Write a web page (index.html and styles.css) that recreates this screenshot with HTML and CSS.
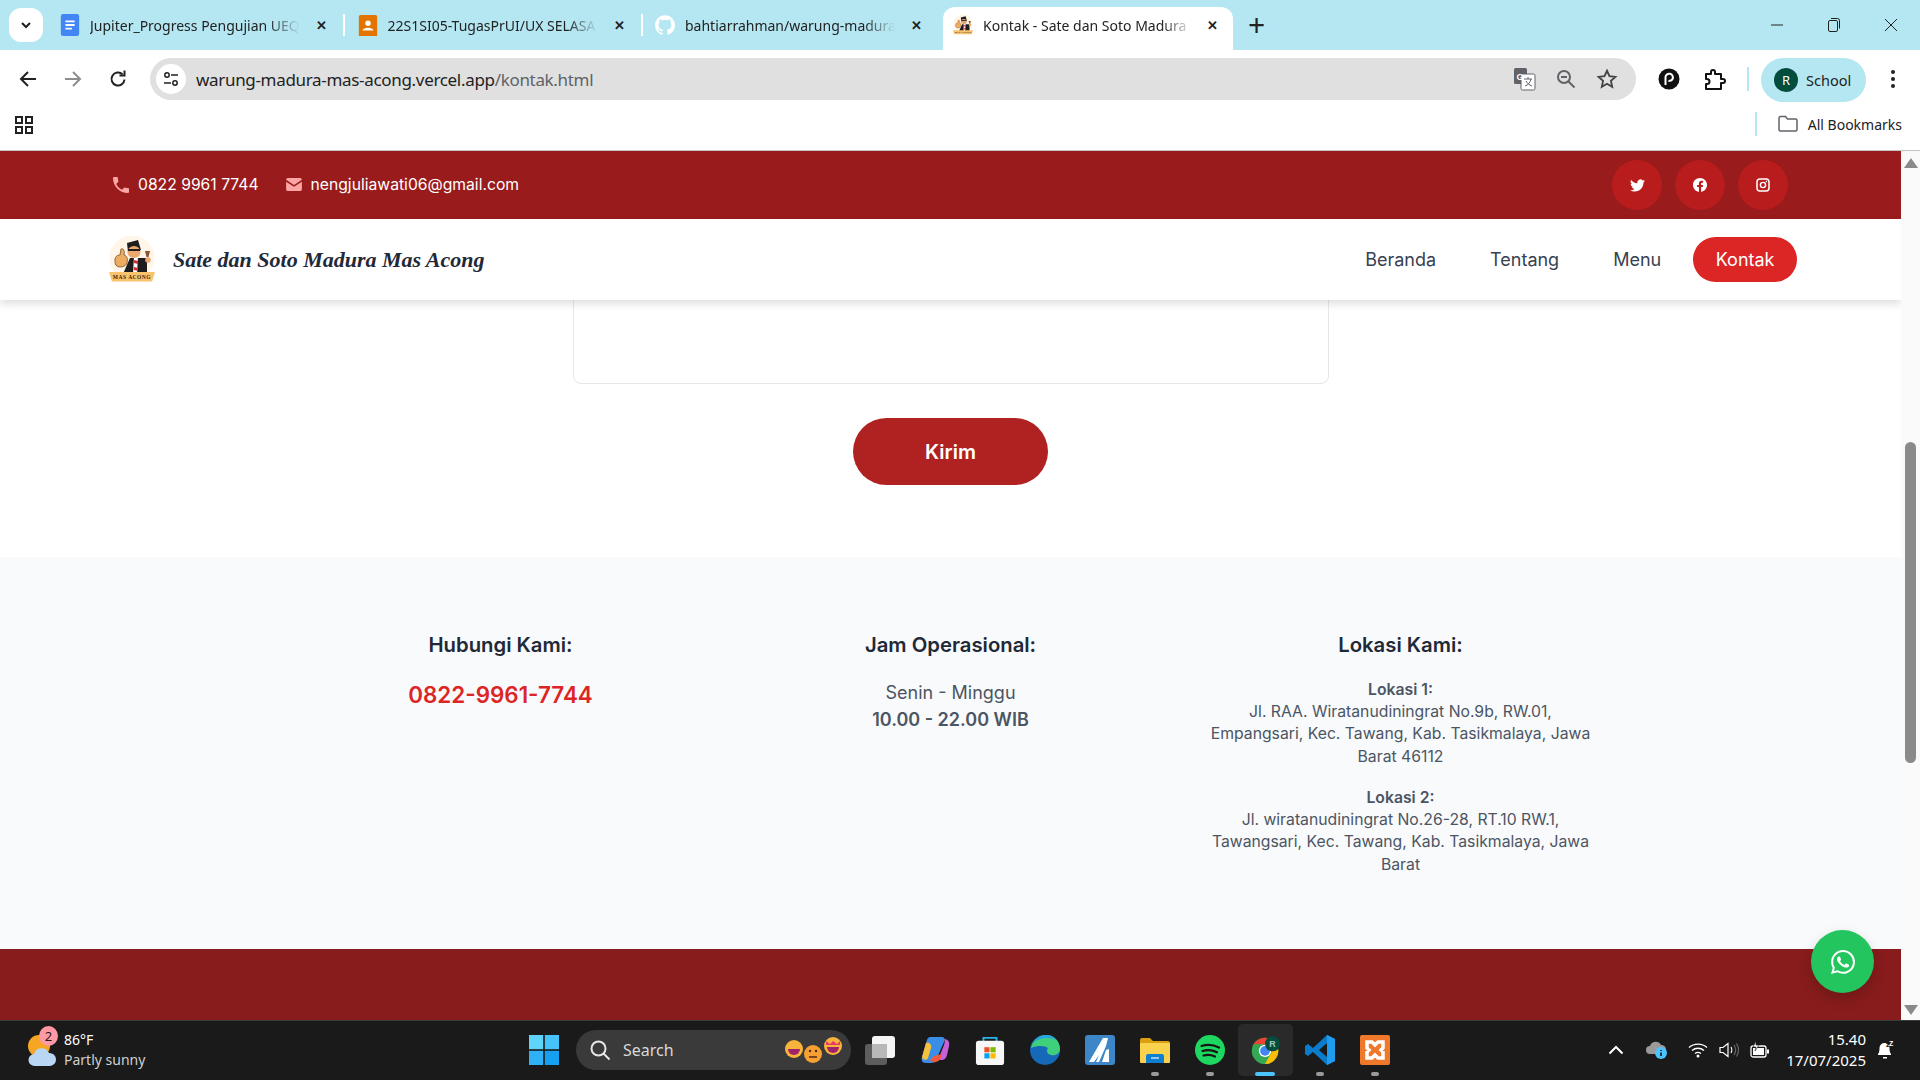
FILE: index.html
```html
<!DOCTYPE html>
<html lang="en">
<head>
  <meta charset="UTF-8">
  <title>Kontak - Sate dan Soto Madura Mas Acong</title>
  <link rel="stylesheet" href="styles.css">
</head>
<body>

  <!-- Browser tabs -->
  <div class="tabstrip">
    <div class="tab-list-btn"><svg width="14" height="14" viewBox="0 0 14 14"><path d="M3 5l4 4 4-4" fill="none" stroke="#1f1f1f" stroke-width="2"/></svg></div>
    <div class="tab">
      <svg class="tab-icon" viewBox="0 0 20 24"><rect width="20" height="24" rx="2.5" fill="#4285f4"/><path d="M5 8h10M5 12h10M5 16h7" stroke="#fff" stroke-width="2"/></svg>
      <span class="tab-title">Jupiter_Progress Pengujian UEQ</span>
      <span class="tab-close">&#10005;</span>
    </div>
    <div class="tab-sep"></div>
    <div class="tab">
      <svg class="tab-icon" viewBox="0 0 20 24"><rect width="20" height="24" y="1" rx="2" fill="#e37400"/><circle cx="10" cy="10" r="3" fill="#fff"/><path d="M4 18c1-4 11-4 12 0z" fill="#fff"/></svg>
      <span class="tab-title">22S1SI05-TugasPrUI/UX SELASA</span>
      <span class="tab-close">&#10005;</span>
    </div>
    <div class="tab-sep"></div>
    <div class="tab">
      <svg class="tab-icon" viewBox="0 0 24 24"><path fill="#fff" d="M12 .297c-6.63 0-12 5.373-12 12 0 5.303 3.438 9.8 8.205 11.385.6.113.82-.258.82-.577 0-.285-.01-1.04-.015-2.04-3.338.724-4.042-1.61-4.042-1.61C4.422 18.07 3.633 17.7 3.633 17.7c-1.087-.744.084-.729.084-.729 1.205.084 1.838 1.236 1.838 1.236 1.07 1.835 2.809 1.305 3.495.998.108-.776.417-1.305.76-1.605-2.665-.3-5.466-1.332-5.466-5.93 0-1.31.465-2.38 1.235-3.22-.135-.303-.54-1.523.105-3.176 0 0 1.005-.322 3.3 1.23.96-.267 1.98-.399 3-.405 1.02.006 2.04.138 3 .405 2.28-1.552 3.285-1.23 3.285-1.23.645 1.653.24 2.873.12 3.176.765.84 1.23 1.91 1.23 3.22 0 4.61-2.805 5.625-5.475 5.92.42.36.81 1.096.81 2.22 0 1.606-.015 2.896-.015 3.286 0 .315.21.69.825.57C20.565 22.092 24 17.592 24 12.297c0-6.627-5.373-12-12-12"/></svg>
      <span class="tab-title">bahtiarrahman/warung-madura</span>
      <span class="tab-close">&#10005;</span>
    </div>
    <div class="tab tab-active">
      <svg class="tab-icon tab-icon-logo" viewBox="0 0 46 48"><use href="#logo-art"/></svg>
      <span class="tab-title">Kontak - Sate dan Soto Madura</span>
      <span class="tab-close">&#10005;</span>
    </div>
    <div class="new-tab">+</div>
    <div class="win-controls">
      <svg width="14" height="14" viewBox="0 0 14 14"><path d="M1 7h12" stroke="#222" stroke-width="1"/></svg>
      <svg width="14" height="16" viewBox="0 0 14 16"><rect x="1.5" y="3.5" width="9" height="11" rx="1.5" fill="none" stroke="#222"/><path d="M4 1.5h6.500a2 2 0 012 2v8" fill="none" stroke="#222"/></svg>
      <svg width="14" height="14" viewBox="0 0 14 14"><path d="M1 1l12 12M13 1L1 13" stroke="#222"/></svg>
    </div>
  </div>

  <!-- Address bar -->
  <div class="toolbar">
    <div class="nav-btns">
      <svg width="20" height="20" viewBox="0 0 20 20"><path d="M18 10H3M10 3l-7 7 7 7" fill="none" stroke="#222" stroke-width="2"/></svg>
      <svg width="20" height="20" viewBox="0 0 20 20"><path d="M2 10h15M10 3l7 7-7 7" fill="none" stroke="#8d8d8d" stroke-width="2"/></svg>
      <svg width="20" height="20" viewBox="0 0 20 20"><path d="M16.500 10.500a6.500 6.500 0 11-2-5.200" fill="none" stroke="#222" stroke-width="2"/><path d="M16.500 1.500v5h-5" fill="none" stroke="#222" stroke-width="2"/></svg>
    </div>
    <div class="omnibox">
      <div class="site-info"><svg width="18" height="18" viewBox="0 0 18 18"><circle cx="5" cy="5" r="2.200" fill="none" stroke="#222" stroke-width="1.500"/><circle cx="13" cy="13" r="2.200" fill="none" stroke="#222" stroke-width="1.500"/><path d="M9 5h7M2 13h7" stroke="#222" stroke-width="1.500"/></svg></div>
      <span class="url">warung-madura-mas-acong.vercel.app<span class="url-path">/kontak.html</span></span>
      <div class="omni-icons">
        <svg width="22" height="24" viewBox="0 0 22 24"><rect x="0" y="1" width="13" height="16" rx="1.500" fill="#5f6368"/><rect x="7" y="7" width="14" height="16" rx="1.500" fill="#fff" stroke="#5f6368"/><text x="2.500" y="13" font-size="9" font-weight="700" fill="#fff" font-family="Liberation Sans">G</text><path d="M10 12h8M14 10v2M11 19c3-1 5-3 6-7M12 14c1 2 3 4 6 5" fill="none" stroke="#5f6368"/></svg>
        <svg width="20" height="20" viewBox="0 0 20 20"><circle cx="8" cy="8" r="6" fill="none" stroke="#5f6368" stroke-width="2"/><path d="M12.500 12.500l6 6" stroke="#5f6368" stroke-width="2"/><path d="M5 8h6" stroke="#5f6368" stroke-width="2"/></svg>
        <svg width="22" height="22" viewBox="0 0 24 24"><path d="M12 3l2.700 6 6.500.7-4.900 4.400 1.400 6.400-5.700-3.300-5.700 3.300 1.400-6.400-4.900-4.400 6.500-.7z" fill="none" stroke="#444" stroke-width="2"/></svg>
      </div>
    </div>
    <div class="ext-icons">
      <svg width="22" height="22" viewBox="0 0 22 22"><circle cx="11" cy="11" r="10.500" fill="#111"/><path d="M7.500 17V9a3.700 3.700 0 117 2c-1 2-3.500 2-4 1.500" fill="none" stroke="#fff" stroke-width="2"/></svg>
      <svg width="22" height="22" viewBox="0 0 22 22"><path d="M2 6h5V4a2 2 0 014 0v2h6v5h2a2 2 0 010 4h-2v6H2v-5h1a2.500 2.500 0 000-5H2z" fill="none" stroke="#111" stroke-width="2" stroke-linejoin="round"/></svg>
    </div>
    <div class="toolbar-sep"></div>
    <div class="profile"><span class="avatar">R</span>School</div>
    <svg class="kebab" width="4" height="18" viewBox="0 0 4 18"><circle cx="2" cy="2" r="2" fill="#222"/><circle cx="2" cy="9" r="2" fill="#222"/><circle cx="2" cy="16" r="2" fill="#222"/></svg>
  </div>

  <!-- Bookmarks -->
  <div class="bookmarks">
    <svg width="18" height="18" viewBox="0 0 18 18"><g fill="none" stroke="#222" stroke-width="2"><rect x="1" y="1" width="6" height="6"/><rect x="11" y="1" width="6" height="6"/><rect x="1" y="11" width="6" height="6"/><rect x="11" y="11" width="6" height="6"/></g></svg>
    <div class="bookmarks-right">
      <div class="toolbar-sep"></div>
      <svg width="20" height="18" viewBox="0 0 20 18"><path d="M1 3a1.500 1.500 0 011.500-1.500h5l2 2.500h8A1.500 1.500 0 0119 5.500v9a1.500 1.500 0 01-1.500 1.500h-15A1.500 1.500 0 011 14.500z" fill="none" stroke="#5f6368" stroke-width="1.500"/></svg>
      <span>All Bookmarks</span>
    </div>
  </div>

  <div class="viewport">
    <div class="page">

      <header class="topbar">
        <div class="topbar-contact">
          <span class="contact-item">
            <svg width="16" height="16" viewBox="3 3 18 18"><path fill="#fca5a5" d="M6.620 10.790c1.440 2.830 3.760 5.140 6.590 6.590l2.200-2.200c.27-.27.67-.36 1.020-.24 1.120.37 2.330.57 3.570.57.55 0 1 .45 1 1V20c0 .55-.45 1-1 1-9.390 0-17-7.610-17-17 0-.55.45-1 1-1h3.500c.55 0 1 .45 1 1 0 1.250.2 2.450.57 3.570.11.35.03.74-.25 1.020l-2.200 2.200z"/></svg>
            0822 9961 7744
          </span>
          <span class="contact-item">
            <svg width="16" height="13" viewBox="0 0 17 14"><path fill="#fca5a5" d="M0 2a2 2 0 012-2h13a2 2 0 012 2L8.500 7.500 0 2zm0 2l8.500 5.500L17 4v8a2 2 0 01-2 2H2a2 2 0 01-2-2z"/></svg>
            nengjuliawati06@gmail.com
          </span>
        </div>
        <div class="socials">
          <a class="social"><svg width="15" height="15" viewBox="0 0 24 24"><path fill="#fff" d="M23.953 4.570a10 10 0 01-2.825.775 4.958 4.958 0 002.163-2.723c-.951.555-2.005.959-3.127 1.184a4.920 4.920 0 00-8.384 4.482C7.690 8.095 4.067 6.130 1.640 3.162a4.822 4.822 0 00-.666 2.475c0 1.710.87 3.213 2.188 4.096a4.904 4.904 0 01-2.228-.616v.06a4.923 4.923 0 003.946 4.827 4.996 4.996 0 01-2.212.085 4.936 4.936 0 004.604 3.417 9.867 9.867 0 01-6.102 2.105c-.39 0-.779-.023-1.170-.067a13.995 13.995 0 007.557 2.209c9.053 0 13.998-7.496 13.998-13.985 0-.21 0-.42-.015-.63A9.935 9.935 0 0024 4.590z"/></svg></a>
          <a class="social"><svg width="14" height="14" viewBox="0 0 24 24"><path fill="#fff" d="M24 12.073c0-6.627-5.373-12-12-12s-12 5.373-12 12c0 5.990 4.388 10.954 10.125 11.854v-8.385H7.078v-3.470h3.047V9.430c0-3.007 1.792-4.669 4.533-4.669 1.312 0 2.686.235 2.686.235v2.953H15.830c-1.491 0-1.956.925-1.956 1.874v2.250h3.328l-.532 3.470h-2.796v8.385C19.612 23.027 24 18.062 24 12.073z"/></svg></a>
          <a class="social"><svg width="14" height="14" viewBox="0 0 14 14"><rect x="1" y="1" width="12" height="12" rx="3" fill="none" stroke="#fff" stroke-width="1.500"/><circle cx="7" cy="7" r="2.600" fill="none" stroke="#fff" stroke-width="1.400"/><circle cx="10.400" cy="3.600" r=".8" fill="#fff"/></svg></a>
        </div>
      </header>

      <nav class="navbar">
        <div class="brand">
          <svg class="brand-logo" viewBox="0 0 46 48">
            <g id="logo-art">
              <circle cx="23" cy="22" r="22.500" fill="#fff5e9"/>
              <path d="M21 22h17v16H14z" fill="#1d1d1d"/>
              <path d="M25 19l4 1-1 19h-4z" fill="#fff"/>
              <path d="M25 24l4 1v3l-4-1zM25 31l4 1v3l-4-1z" fill="#d32f2f"/>
              <path d="M18 7l11-3 3 10-13 2z" fill="#1d1d1d"/>
              <ellipse cx="25" cy="16" rx="6.500" ry="6" fill="#e9a870"/>
              <path d="M19 13h12v2H19z" fill="#1d1d1d"/>
              <path d="M6 24c0-4 3-5 5-5l1-6c2-1 4 1 3 6 3 1 4 3 3 8-1 4-8 5-10 3-2-1-2-3-2-6z" fill="#eeab62" stroke="#7a4a22" stroke-width=".8"/>
              <path d="M36 15h5l-1.500 6h-2z" fill="#8a5530"/>
              <circle cx="39" cy="24" r="2.800" fill="#e9a870"/>
              <path d="M0 36h46l-3 9.500H3z" fill="#f8c36c"/>
              <text x="23" y="43" text-anchor="middle" font-size="5.500" font-weight="700" fill="#3a2810" font-family="Liberation Serif" letter-spacing=".5">MAS ACONG</text>
            </g>
          </svg>
          <span class="brand-name">Sate dan Soto Madura Mas Acong</span>
        </div>
        <div class="nav-links">
          <a class="nav-link">Beranda</a>
          <a class="nav-link">Tentang</a>
          <a class="nav-link">Menu</a>
          <a class="nav-link nav-active">Kontak</a>
        </div>
      </nav>

      <section class="form-section">
        <div class="message-box"></div>
        <button class="submit-btn">Kirim</button>
      </section>

      <section class="info-section">
        <div class="info-col">
          <h3>Hubungi Kami:</h3>
          <p class="info-phone">0822-9961-7744</p>
        </div>
        <div class="info-col">
          <h3>Jam Operasional:</h3>
          <p class="info-hours">Senin - Minggu<br><strong>10.00 - 22.00 WIB</strong></p>
        </div>
        <div class="info-col">
          <h3>Lokasi Kami:</h3>
          <p class="info-addr"><strong>Lokasi 1:</strong><br>Jl. RAA. Wiratanudiningrat No.9b, RW.01, Empangsari, Kec. Tawang, Kab. Tasikmalaya, Jawa Barat 46112</p>
          <p class="info-addr"><strong>Lokasi 2:</strong><br>Jl. wiratanudiningrat No.26-28, RT.10 RW.1, Tawangsari, Kec. Tawang, Kab. Tasikmalaya, Jawa Barat</p>
        </div>
      </section>

      <footer class="site-footer"></footer>

      <a class="wa-btn"><svg width="24" height="24" viewBox="0 0 24 24"><path fill="#fff" d="M17.472 14.382c-.297-.149-1.758-.867-2.030-.967-.273-.099-.471-.148-.67.15-.197.297-.767.966-.94 1.164-.173.199-.347.223-.644.075-.297-.15-1.255-.463-2.390-1.475-.883-.788-1.480-1.761-1.653-2.059-.173-.297-.018-.458.13-.606.134-.133.298-.347.446-.52.149-.174.198-.298.298-.497.099-.198.05-.371-.025-.52-.075-.149-.669-1.612-.916-2.207-.242-.579-.487-.5-.669-.51-.173-.008-.371-.01-.57-.01-.198 0-.52.074-.792.372-.272.297-1.040 1.016-1.040 2.479 0 1.462 1.065 2.875 1.213 3.074.149.198 2.096 3.200 5.077 4.487.709.306 1.262.489 1.694.625.712.227 1.360.195 1.871.118.571-.085 1.758-.719 2.006-1.413.248-.694.248-1.289.173-1.413-.074-.124-.272-.198-.57-.347m-5.421 7.403h-.004a9.870 9.870 0 01-5.031-1.378l-.361-.214-3.741.982.998-3.648-.235-.374a9.860 9.860 0 01-1.510-5.260c.001-5.450 4.436-9.884 9.888-9.884 2.640 0 5.122 1.030 6.988 2.898a9.825 9.825 0 012.893 6.994c-.003 5.450-4.437 9.884-9.885 9.884m8.413-18.297A11.815 11.815 0 0012.050 0C5.495 0 .16 5.335.157 11.892c0 2.096.547 4.142 1.588 5.945L.057 24l6.305-1.654a11.882 11.882 0 005.683 1.448h.005c6.554 0 11.890-5.335 11.893-11.893a11.821 11.821 0 00-3.480-8.413z"/></svg></a>
    </div>

    <div class="scrollbar">
      <svg width="14" height="10" viewBox="0 0 14 10"><path d="M7 0l7 10H0z" fill="#8a8a8a"/></svg>
      <div class="scroll-thumb"></div>
      <svg width="14" height="10" viewBox="0 0 14 10"><path d="M0 0h14L7 10z" fill="#8a8a8a"/></svg>
    </div>
  </div>

  <!-- Windows taskbar -->
  <div class="taskbar">
    <div class="weather">
      <div class="weather-icon">
        <svg width="30" height="36" viewBox="0 0 30 36"><circle cx="12" cy="14" r="11" fill="#f5a623"/><path d="M8 34a6 6 0 01-1-12 8 8 0 0115-1 6.500 6.500 0 011 13z" fill="#b9d7f5"/></svg>
        <span class="badge">2</span>
      </div>
      <div class="weather-text"><span>86°F</span><span class="weather-sub">Partly sunny</span></div>
    </div>

    <div class="task-center">
      <svg class="task-icon win-logo" viewBox="0 0 30 30"><rect width="14.200" height="14.200" fill="#5fd4fb"/><rect x="15.800" width="14.200" height="14.200" fill="#45c3fa"/><rect y="15.800" width="14.200" height="14.200" fill="#2eb1f6"/><rect x="15.800" y="15.800" width="14.200" height="14.200" fill="#16a0f2"/></svg>
      <div class="search-box">
        <svg width="22" height="22" viewBox="0 0 22 22"><circle cx="9.500" cy="9.500" r="7" fill="none" stroke="#e6e6e6" stroke-width="2"/><path d="M14.500 14.500l6 6" stroke="#e6e6e6" stroke-width="2"/></svg>
        <span>Search</span>
        <svg class="search-emoji" width="60" height="30" viewBox="0 0 60 30">
          <circle cx="10" cy="14" r="9" fill="#f8b33c"/><path d="M4 14h12a6 6 0 01-12 0z" fill="#a0226a"/>
          <circle cx="29" cy="19" r="9" fill="#f5a031"/><path d="M25 22h8" stroke="#4b2a12" stroke-width="1.500"/><circle cx="26" cy="16" r="1.200" fill="#4b2a12"/><circle cx="32" cy="16" r="1.200" fill="#4b2a12"/>
          <circle cx="49" cy="11" r="9" fill="#f8b33c"/><path d="M43 12h12a6 6 0 01-12 0z" fill="#a0226a"/><path d="M42 6l4 3 3-3v4h-7zM49 6l4 3 3-3v4h-7z" fill="#ea3a6a"/>
        </svg>
      </div>
      <div class="task-apps">
        <div class="task-app">
          <svg class="task-icon" viewBox="0 0 30 30"><rect x="0" y="9" width="22" height="21" rx="3" fill="#5d5d5d"/><rect x="7" y="1" width="23" height="22" rx="3" fill="#f5f5f5"/><rect x="7" y="9" width="15" height="14" fill="#b8b8b8"/></svg>
        </div>
        <div class="task-app">
          <svg class="task-icon" viewBox="0 0 30 30"><path d="M10 2h12c3 0 3 3 2 5l-8 18c-1 3-4 3-7 3H6c-4 0-5-3-4-6l4-14c1-4 2-6 4-6z" fill="#3b8ee8"/><path d="M2 22l4-14c3-1 6 1 5 5l-3 10c-1 3-6 2-6-1z" fill="#f5c13b"/><path d="M24 4c4 0 6 3 5 7l-2 9c-1 4-3 5-6 5h-3l6-15c1-3 1-5 0-6z" fill="#c860d8"/><path d="M10 25c2 3 8 3 10-1l2-5-8 2z" fill="#ee5a3a"/></svg>
        </div>
        <div class="task-app">
          <svg class="task-icon" viewBox="0 0 30 32"><path d="M8 8V3h14v5" fill="none" stroke="#27b5e8" stroke-width="2"/><rect y="6" width="30" height="26" rx="3" fill="#f7f7f7"/><rect x="9" y="13" width="5.500" height="5.500" fill="#f25022"/><rect x="15.500" y="13" width="5.500" height="5.500" fill="#7fba00"/><rect x="9" y="19.500" width="5.500" height="5.500" fill="#00a4ef"/><rect x="15.500" y="19.500" width="5.500" height="5.500" fill="#ffb900"/></svg>
        </div>
        <div class="task-app">
          <svg class="task-icon" viewBox="0 0 30 30"><circle cx="15" cy="15" r="15" fill="#1668b8"/><path d="M1 13C3 4 10 0 16 0c8 0 14 6 14 14 0 5-5 7-9 6-4-1-5-4-3-7-3-2-9-3-17 0z" fill="#3fd07c"/><path d="M3 8C7 2 12 0 16 0c5 0 8 2 10 5-6-3-16-3-23 3z" fill="#2aa4e0"/></svg>
        </div>
        <div class="task-app">
          <svg class="task-icon" viewBox="0 0 30 30"><rect width="30" height="30" rx="3" fill="#3d87c8"/><path d="M4 27l14-24h5l-2 8-7 16h-3l3-7-5 7zM17 27l4-12 3-1v13z" fill="#fff"/></svg>
        </div>
        <div class="task-app app-open">
          <svg class="task-icon" viewBox="0 0 30 30"><path d="M0 5a2 2 0 012-2h8l3 3h15a2 2 0 012 2v4H0z" fill="#d9a012"/><rect y="8" width="30" height="20" rx="1" fill="#fbd24e"/><path d="M6 28v-7a2 2 0 012-2h14a2 2 0 012 2v7z" fill="#0f7fd4"/><path d="M11 23h8" stroke="#bfe3ff" stroke-width="1.500"/></svg>
        </div>
        <div class="task-app app-open">
          <svg class="task-icon" viewBox="0 0 30 30"><circle cx="15" cy="15" r="15" fill="#1ed760"/><path d="M6.500 11c6-1.800 12-1.300 17.500 1.500M7.500 16c5-1.400 10-1 14.500 1.300M8.500 20.500c4-1 8-.7 11.500 1" fill="none" stroke="#151515" stroke-width="2.200" stroke-linecap="round"/></svg>
        </div>
        <div class="task-app app-active">
          <svg class="task-icon" viewBox="-2 0 34 32"><circle cx="15" cy="17" r="15" fill="#34a853"/><path d="M2 9.500a15 15 0 0126 0H15z" fill="#ea4335"/><path d="M28 9.500A15 15 0 0115 32l7-13z" fill="#fbbc04"/><circle cx="15" cy="17" r="7" fill="#fff"/><circle cx="15" cy="17" r="5.500" fill="#4285f4"/><circle cx="23.500" cy="9" r="8.500" fill="#034d3d"/><text x="23.500" y="12.500" text-anchor="middle" font-size="10" font-weight="700" fill="#a8c7bd" font-family="Liberation Sans">R</text></svg>
        </div>
        <div class="task-app app-open">
          <svg class="task-icon" viewBox="0 0 30 30"><path d="M22 0l8 4v22l-8 4L8 17l-5 4-3-2v-8l3-2 5 4z" fill="#0a7ccb"/><path d="M22 0l8 4v22l-8 4z" fill="#1f9cf0"/><path d="M22 8l-8 7 8 7z" fill="#1a1a1a"/></svg>
        </div>
        <div class="task-app app-open">
          <svg class="task-icon" viewBox="0 0 30 30"><rect width="30" height="30" rx="2" fill="#f0782a"/><path d="M7 7h5l3 3 3-3h5v6l-2 2 2 2v6h-5l-3-3-3 3H7v-6l2-2-2-2z" fill="none" stroke="#fff" stroke-width="3.500"/></svg>
        </div>
      </div>
    </div>

    <div class="tray">
      <svg width="16" height="10" viewBox="0 0 16 10"><path d="M1.500 8.500L8 2l6.500 6.500" fill="none" stroke="#fff" stroke-width="2"/></svg>
      <svg class="tray-cloud" width="22" height="18" viewBox="0 0 22 18"><path d="M4 13a4 4 0 010-8 6 6 0 0111-1 4.500 4.500 0 011 9z" fill="#9a9a9a"/><circle cx="15" cy="12" r="6" fill="#4cc2ff"/><path d="M15 9v1M15 11.500V15" stroke="#111" stroke-width="1.500"/></svg>
      <svg width="20" height="16" viewBox="0 0 20 16"><path d="M1 5.500c5-4.500 13-4.500 18 0M4 8.500c3.500-3 8.500-3 12 0M7 11.500c2-1.500 4-1.500 6 0" fill="none" stroke="#fff" stroke-width="1.400"/><circle cx="10" cy="14" r="1.500" fill="#fff"/></svg>
      <svg width="20" height="16" viewBox="0 0 20 16"><path d="M1 5.500h3l5-4v13l-5-4H1z" fill="none" stroke="#fff" stroke-width="1.200"/><path d="M12 5c1 1.500 1 4.500 0 6" fill="none" stroke="#fff" stroke-width="1.200"/><path d="M15 3c2 3 2 7 0 10M17.500 1.500c2.500 4 2.500 9 0 13" fill="none" stroke="#666" stroke-width="1.200"/></svg>
      <svg width="20" height="18" viewBox="0 0 20 18"><rect x="1" y="5" width="15" height="11" rx="2" fill="none" stroke="#fff" stroke-width="1.300"/><rect x="3" y="7" width="11" height="7" fill="#fff"/><rect x="17" y="8.500" width="2" height="4" fill="#fff"/><path d="M6 0L3 6h3l-1 4 4-6H6z" fill="#fff" stroke="#1a1a1a" stroke-width=".6"/></svg>
      <div class="clock"><span>15.40</span><span>17/07/2025</span></div>
      <svg width="18" height="20" viewBox="0 0 18 20"><path d="M2 14c1-1 1.500-3 1.500-6a5 5 0 0110 0c0 3 .5 5 1.500 6v1H2z" fill="#fff"/><path d="M7 17h4v1.500H7z" fill="#fff"/><text x="10" y="7" font-size="7" font-weight="700" fill="#111" font-family="Liberation Sans">z</text><text x="13" y="5.500" font-size="7" font-weight="700" fill="#fff" font-family="Liberation Sans">Z</text></svg>
    </div>
  </div>

</body>
</html>
```

FILE: styles.css
```css
* {
  box-sizing: border-box;
}

html, body {
  height: 100%;
}

body {
  margin: 0;
  width: 1920px;
  height: 1080px;
  overflow: hidden;
  display: flex;
  flex-direction: column;
  font-family: Inter, "Liberation Sans", sans-serif;
  background: #fff;
}

svg {
  display: block;
  flex-shrink: 0;
}

/* browser chrome */
.tabstrip {
  height: 50px;
  display: flex;
  align-items: flex-end;
  background: #b5e7f3;
  padding-left: 9px;
  font-family: "Noto Sans", sans-serif;
  font-size: 14px;
  color: #222;
}

.tab-list-btn {
  width: 34px;
  height: 34px;
  margin-bottom: 8px;
  margin-right: 11px;
  border-radius: 12px;
  background: #fff;
  display: flex;
  align-items: center;
  justify-content: center;
}

.tab {
  width: 288px;
  height: 43px;
  display: flex;
  align-items: center;
  padding: 0 15px 7px 6px;
}

.tab-active {
  width: 290px;
  margin-left: 6px;
  padding-left: 10px;
  padding-right: 15px;
  background: #fff;
  border-radius: 12px 12px 0 0;
}

.tab-icon {
  width: 20px;
  height: 22px;
  margin-right: 10px;
}

.tab-title {
  width: 210px;
  white-space: nowrap;
  overflow: hidden;
  -webkit-mask-image: linear-gradient(to right, #000 85%, transparent 100%);
  mask-image: linear-gradient(to right, #000 85%, transparent 100%);
}

.tab-close {
  margin-left: auto;
  font-size: 13px;
  font-weight: 700;
}

.tab-sep {
  width: 2px;
  height: 22px;
  margin: 0 6.500px 14px 1px;
  background: #fff;
}

.new-tab {
  margin: 0 0 10px 15px;
  font-size: 30px;
  line-height: 30px;
}

.win-controls {
  margin: 0 22px 17px auto;
  display: flex;
  align-items: center;
  gap: 43px;
}

.toolbar {
  height: 50px;
  display: flex;
  align-items: flex-start;
  background: #fff;
  border-radius: 12px 12px 0 0;
  margin-top: 0;
  padding-top: 8px;
  position: relative;
}

.nav-btns {
  width: 150px;
  height: 42px;
  padding-left: 18px;
  display: flex;
  align-items: center;
  gap: 25px;
}

.omnibox {
  width: 1486px;
  height: 42px;
  border-radius: 21px;
  background: #e0e0e0;
  display: flex;
  align-items: center;
  padding: 0 18px 0 6px;
}

.site-info {
  width: 30px;
  height: 30px;
  border-radius: 50%;
  background: #fff;
  display: flex;
  align-items: center;
  justify-content: center;
  margin-right: 10px;
}

.url {
  font-family: "Noto Sans", sans-serif;
  font-size: 17px;
  letter-spacing: -0.32px;
  color: #222;
}

.url-path {
  color: #5f6368;
}

.omni-icons {
  margin-left: auto;
  display: flex;
  align-items: center;
  gap: 20px;
}

.ext-icons {
  height: 42px;
  margin-left: 22px;
  display: flex;
  align-items: center;
  gap: 24px;
}

.toolbar-sep {
  width: 2px;
  height: 24px;
  background: #b5e7f3;
}

.toolbar > .toolbar-sep {
  margin: 9px 12px 0 21px;
}

.profile {
  width: 105px;
  height: 44px;
  border-radius: 22px;
  background: #b5e7f3;
  display: flex;
  align-items: center;
  padding-left: 13px;
  font-family: "Noto Sans", sans-serif;
  font-size: 14.500px;
  color: #222;
}

.avatar {
  width: 24px;
  height: 24px;
  margin-right: 8px;
  border-radius: 50%;
  background: #034d3d;
  color: #fff;
  font-size: 13px;
  display: flex;
  align-items: center;
  justify-content: center;
}

.kebab {
  margin: 12px 0 0 25px;
}

.bookmarks {
  height: 50px;
  display: flex;
  align-items: center;
  padding: 0 18px 0 15px;
  background: #fff;
}

.bookmarks-right {
  margin-left: auto;
  margin-bottom: 2px;
  display: flex;
  align-items: center;
  font-family: "Noto Sans", sans-serif;
  font-size: 14px;
  color: #222;
}

.bookmarks-right .toolbar-sep {
  margin-right: 21px;
}

.bookmarks-right svg {
  margin-right: 10px;
}

/* page */
.viewport {
  height: 870px;
  display: flex;
  border-top: 1px solid #c4c4c4;
}

.page {
  width: 1901px;
  position: relative;
  overflow: hidden;
  background: #fff;
}

.topbar {
  height: 68px;
  padding: 0 113px;
  display: flex;
  align-items: center;
  justify-content: space-between;
  background: #991b1b;
  color: #fff;
}

.topbar-contact {
  display: flex;
  gap: 27px;
  padding-bottom: 1px;
  font-size: 15.700px;
}

.contact-item {
  display: flex;
  align-items: center;
  gap: 9px;
}

.socials {
  display: flex;
  gap: 13px;
}

.social {
  width: 50px;
  height: 50px;
  border-radius: 50%;
  background: #b91c1c;
  display: flex;
  align-items: center;
  justify-content: center;
}

.navbar {
  height: 81px;
  position: relative;
  z-index: 2;
  padding: 0 104px 0 109px;
  display: flex;
  align-items: center;
  justify-content: space-between;
  background: #fff;
  box-shadow: 0 4px 8px rgba(0, 0, 0, 0.13);
}

.brand {
  display: flex;
  align-items: center;
  gap: 18px;
}

.brand-logo {
  width: 46px;
  height: 48px;
}

.brand-name {
  font-family: "Liberation Serif", serif;
  font-style: italic;
  font-weight: 700;
  font-size: 22px;
  color: #1f2937;
}

.nav-links {
  display: flex;
  align-items: center;
  gap: 10px;
}

.nav-link {
  font-size: 18px;
  color: #374151;
  padding: 0 22.500px;
  line-height: 45px;
}

.nav-link:not(.nav-active) {
  padding: 0 22px;
}

.nav-active {
  background: #dc2626;
  color: #fff;
  border-radius: 23px;
}

.form-section {
  height: 257px;
  display: flex;
  flex-direction: column;
  align-items: center;
}

.message-box {
  width: 756px;
  height: 84px;
  border: 1px solid #e5e7eb;
  border-top: 0;
  border-radius: 0 0 8px 8px;
}

.submit-btn {
  width: 195px;
  height: 67px;
  margin-top: 34px;
  border: 0;
  border-radius: 34px;
  background: #b02222;
  color: #fff;
  font-family: inherit;
  font-size: 20px;
  font-weight: 600;
}

.info-section {
  height: 392px;
  padding-top: 74px;
  display: grid;
  grid-template-columns: repeat(3, 402px);
  column-gap: 48px;
  justify-content: center;
  align-items: start;
  background: #f9fafb;
  text-align: center;
  color: #4b5563;
}

.info-col h3 {
  margin: 0;
  font-size: 20.300px;
  line-height: 28px;
  font-weight: 600;
  color: #1f2937;
}

.info-phone {
  margin: 20px 0 0;
  font-size: 22.400px;
  line-height: 32px;
  font-weight: 600;
  color: #dc2626;
}

.info-hours {
  margin: 20px 0 0;
  font-size: 18px;
  line-height: 27px;
}

.info-hours strong,
.info-addr strong {
  font-weight: 600;
}

.info-addr {
  margin: 19.500px 6px 0;
  font-size: 15.750px;
  line-height: 22.400px;
}

.info-addr + .info-addr {
  margin-top: 18.500px;
}

.site-footer {
  height: 80px;
  background: #881c1c;
}

.wa-btn {
  position: absolute;
  left: 1811px;
  top: 779px;
  width: 63px;
  height: 63px;
  border-radius: 50%;
  background: #22c55e;
  box-shadow: 0 6px 14px rgba(0, 0, 0, 0.18);
  display: flex;
  align-items: center;
  justify-content: center;
}

.scrollbar {
  width: 19px;
  padding: 7px 0 5px;
  display: flex;
  flex-direction: column;
  align-items: center;
  background: #fafafa;
}

.scroll-thumb {
  width: 11px;
  height: 321px;
  margin: 274px 0 auto;
  border-radius: 6px;
  background: #8a8a8a;
}

/* taskbar */
.taskbar {
  height: 60px;
  padding-bottom: 2px;
  display: flex;
  align-items: center;
  position: relative;
  border-top: 1px solid #3a3a3a;
  background: #1a1a1a;
  color: #fff;
  font-family: "Noto Sans", sans-serif;
}

.weather {
  width: 529px;
  padding-left: 27px;
  display: flex;
  align-items: center;
  gap: 7px;
}

.weather-icon {
  position: relative;
}

.badge {
  position: absolute;
  left: 12px;
  top: -6px;
  width: 19px;
  height: 20px;
  border-radius: 50%;
  background: #ff99a4;
  color: #1a1a1a;
  font-size: 13px;
  line-height: 20px;
  text-align: center;
}

.weather-text {
  display: flex;
  flex-direction: column;
  font-size: 14px;
  line-height: 20px;
}

.weather-sub {
  color: #cfcfcf;
}

.task-center {
  display: flex;
  align-items: center;
}

.task-icon {
  width: 30px;
  height: 30px;
}

.win-logo {
  margin-right: 17px;
}

.search-box {
  width: 275px;
  height: 40px;
  padding: 0 7px 0 13px;
  display: flex;
  align-items: center;
  gap: 12px;
  border-radius: 20px;
  background: #3a3a3a;
  color: #d8d8d8;
  font-size: 16px;
}

.search-emoji {
  margin-left: auto;
}

.task-apps {
  display: flex;
  align-items: center;
  margin-left: 1.500px;
}

.task-app {
  width: 55px;
  height: 52px;
  display: flex;
  align-items: center;
  justify-content: center;
  position: relative;
}

.app-open::after,
.app-active::after {
  content: "";
  position: absolute;
  bottom: 0;
  left: 50%;
  width: 8px;
  height: 4px;
  margin-left: -4px;
  border-radius: 2px;
  background: #9a9a9a;
}

.app-active {
  background: #2a2a2a;
  border-radius: 5px;
}

.app-active::after {
  width: 20px;
  margin-left: -10px;
  background: #4cc2ff;
}

.tray {
  margin-left: auto;
  padding-right: 26px;
  display: flex;
  align-items: center;
}

.tray > svg {
  margin-right: 11px;
}

.tray > svg:first-child {
  margin-right: 22px;
}

.tray-cloud {
  margin-right: 20px !important;
}

.tray > svg:last-child {
  margin: 0 0 0 10px;
}

.clock {
  width: 79px;
  margin-left: 6px;
  display: flex;
  flex-direction: column;
  align-items: flex-end;
  font-size: 15px;
  line-height: 21px;
}
```
